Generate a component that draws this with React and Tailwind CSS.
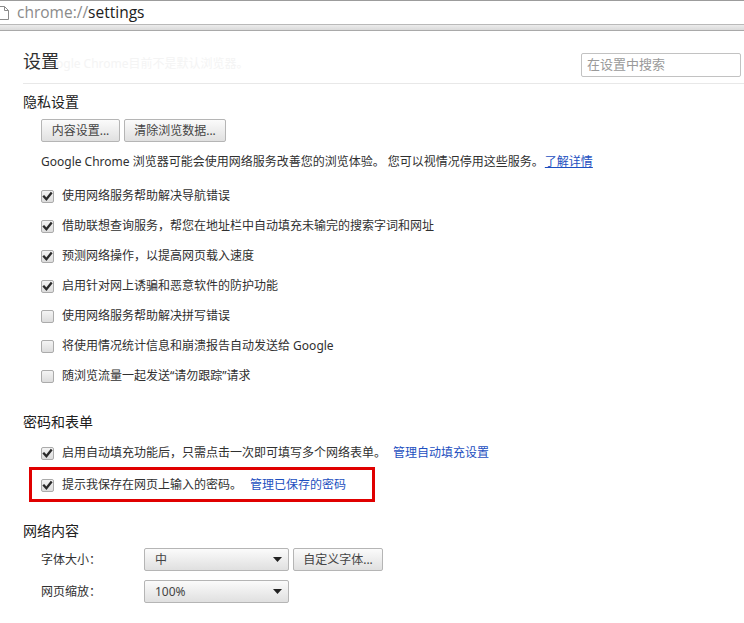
import React from "react";

const FONT = { fontFamily: '"Noto Sans", "Noto Sans CJK SC", sans-serif' };

function Check({ checked }) {
  return (
    <span className="w-[13px] h-[13px] shrink-0 rounded-[2px] border border-[#ababab] bg-gradient-to-b from-[#f4f4f4] to-[#dcdcdc] flex items-center justify-center">
      {checked && (
        <svg width="11" height="11" viewBox="0 0 11 11">
          <path d="M2 5.6 L4.4 8.2 L9 2.4" fill="none" stroke="#2a2a2a" strokeWidth="2.3" strokeLinecap="square" />
        </svg>
      )}
    </span>
  );
}

function CheckRow({ checked, children, h = "h-[30px]" }) {
  return (
    <div className={`${h} flex items-center pl-[18px]`}>
      <Check checked={checked} />
      <span className="ml-[8px] text-[12px] text-[#303030] whitespace-nowrap">{children}</span>
    </div>
  );
}

function Btn({ children, w }) {
  return (
    <button className={`${w} h-[23px] rounded-[2px] border border-[#b5b5b5] bg-gradient-to-b from-[#fbfbfb] to-[#e0e0e0] text-[12px] text-[#444] flex items-center justify-center`}>
      {children}
    </button>
  );
}

function Select({ value }) {
  return (
    <div className="w-[145px] h-[23px] rounded-[2px] border border-[#b5b5b5] bg-gradient-to-b from-[#fbfbfb] to-[#e0e0e0] flex items-center pl-[10px] pr-[6px] text-[12px] text-[#444]">
      <span className="flex-1">{value}</span>
      <svg width="9" height="5" viewBox="0 0 9 5"><path d="M0 0 H9 L4.5 5 Z" fill="#222" /></svg>
    </div>
  );
}

export default function App() {
  return (
    <div className="w-[744px] h-[623px] bg-white overflow-hidden" style={FONT}>
      {/* address bar */}
      <div className="h-[24px] border-t border-[#9c9c9c] flex items-center">
        <svg width="9" height="14" viewBox="0 0 9 14">
          <path d="M-3 0.5 H4.5 L8.5 4.5 V13.5 H-3" fill="#fff" stroke="#8a8a8a" />
          <path d="M4.5 0.5 V4.5 H8.5" fill="none" stroke="#8a8a8a" />
        </svg>
        <span className="ml-[8px] text-[15.5px] leading-none" style={{ fontFamily: '"Open Sans", sans-serif' }}>
          <span className="text-[#8a8a8a]">chrome://</span>
          <span className="text-[#202020]">settings</span>
        </span>
      </div>
      <div className="h-[7px] border-t border-[#b9b9b9] border-b border-b-[#a9a9a9] bg-gradient-to-b from-[#ececec] to-[#dadada]" />

      <div className="pl-[23px]">
        {/* header */}
        <div className="h-[52px] flex items-start">
          <div className="relative mt-[18px] h-[24px] flex items-center">
            <span className="absolute left-[17px] top-[6px] text-[12px] text-[#f4f4f4] whitespace-nowrap">Google Chrome目前不是默认浏览器。</span>
            <span className="relative text-[18px] text-[#303030] leading-none">设置</span>
          </div>
          <div className="flex-1" />
          <div className="mt-[22px] mr-[3px] w-[160px] h-[24px] rounded-[2px] border border-[#c2c2c2] flex items-center pl-[5px] text-[13px] text-[#9a9a9a]">
            在设置中搜索
          </div>
        </div>
        <div className="h-px bg-[#e8e8e8]" />

        {/* privacy */}
        <div className="h-[35px] flex items-center text-[14px] text-[#202020]">隐私设置</div>
        <div className="pl-[18px] flex gap-[4px]">
          <Btn w="w-[79px]">内容设置...</Btn>
          <Btn w="w-[102px]">清除浏览数据...</Btn>
        </div>
        <div className="h-[39px] flex items-center pl-[18px] text-[12px] text-[#303030] whitespace-nowrap">
          Google Chrome 浏览器可能会使用网络服务改善您的浏览体验。 您可以视情况停用这些服务。
          <a className="ml-[1px] text-[#1d4fc0] underline">了解详情</a>
        </div>
        <CheckRow checked>使用网络服务帮助解决导航错误</CheckRow>
        <CheckRow checked>借助联想查询服务，帮您在地址栏中自动填充未输完的搜索字词和网址</CheckRow>
        <CheckRow checked>预测网络操作，以提高网页载入速度</CheckRow>
        <CheckRow checked>启用针对网上诱骗和恶意软件的防护功能</CheckRow>
        <CheckRow>使用网络服务帮助解决拼写错误</CheckRow>
        <CheckRow>将使用情况统计信息和崩溃报告自动发送给 Google</CheckRow>
        <CheckRow>随浏览流量一起发送“请勿跟踪”请求</CheckRow>

        {/* passwords */}
        <div className="mt-[20px] h-[20px] flex items-center text-[14px] text-[#202020]">密码和表单</div>
        <div className="h-[6px]" />
        <CheckRow checked h="h-[32px]">
          启用自动填充功能后，只需点击一次即可填写多个网络表单。
          <a className="ml-[7px] text-[#1d4fc0]">管理自动填充设置</a>
        </CheckRow>
        <div className="relative">
          <CheckRow checked h="h-[32px]">
            提示我保存在网页上输入的密码。
            <a className="ml-[8px] text-[#1d4fc0]">管理已保存的密码</a>
          </CheckRow>
          <div className="absolute left-[6px] top-[-2px] w-[346px] h-[35px] border-[3px] border-[#e00000] pointer-events-none" />
        </div>

        {/* web content */}
        <div className="mt-[19px] h-[20px] flex items-center text-[14px] text-[#202020]">网络内容</div>
        <div className="mt-[8px] pl-[18px] flex items-center">
          <span className="w-[103px] text-[12px] text-[#303030]">字体大小：</span>
          <Select value="中" />
          <div className="ml-[4px]"><Btn w="w-[90px]">自定义字体...</Btn></div>
        </div>
        <div className="mt-[9px] pl-[18px] flex items-center">
          <span className="w-[103px] text-[12px] text-[#303030]">网页缩放：</span>
          <Select value="100%" />
        </div>
      </div>
    </div>
  );
}
